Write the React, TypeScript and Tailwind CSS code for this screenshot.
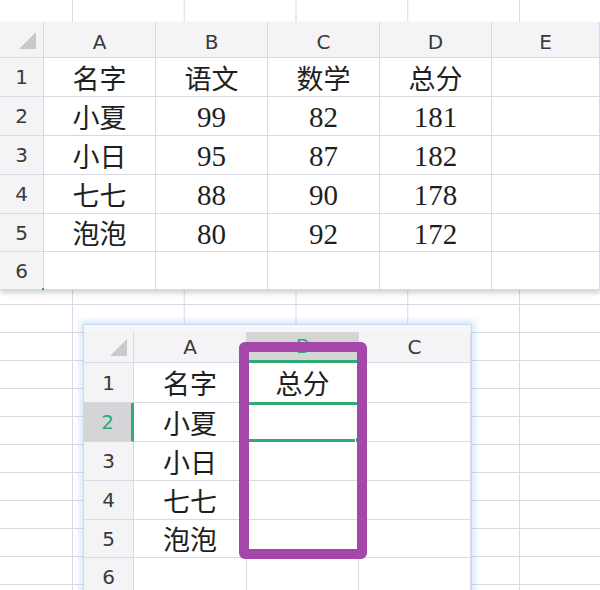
const grid = "border-r border-b border-[#d9d9e4]";
const cjk = "font-['Noto_Sans_CJK_SC','Noto_Sans',sans-serif]";
const num = "font-['Liberation_Serif','Noto_Sans_CJK_SC',serif]";
const head = "font-['DejaVu_Sans','Liberation_Sans',sans-serif]";

const topCols = ["A", "B", "C", "D", "E"];
const topRows = [
  ["名字", "语文", "数学", "总分"],
  ["小夏", "99", "82", "181"],
  ["小日", "95", "87", "182"],
  ["七七", "88", "90", "178"],
  ["泡泡", "80", "92", "172"],
  [],
];

const names = ["名字", "小夏", "小日", "七七", "泡泡", ""];

function Corner() {
  return (
    <svg width="17" height="17" viewBox="0 0 17 17">
      <polygon points="17,0 17,17 0,17" fill="#c9c9c9" />
    </svg>
  );
}

function cellText(v: string) {
  const isNum = /^\d+$/.test(v);
  return (
    <span
      className={`${isNum ? `${num} pt-[3px] text-[29px]` : `${cjk} text-[27px]`} leading-none text-[#1f1f1f]`}
    >
      {v}
    </span>
  );
}

function TopSheet() {
  return (
    <div className="absolute left-0 top-[22px] w-[600px] bg-white shadow-[0_3px_5px_rgba(0,0,0,0.18)]">
      <div className="grid grid-cols-[44px_112px_112px_112px_112px_1fr] grid-rows-[36px_39px_39px_39px_39px_38px_38px]">
        <div className={`${grid} flex items-end justify-end bg-[#f4f4f6] pb-[8px] pr-[7px]`}>
          <Corner />
        </div>
        {topCols.map((c) => (
          <div
            key={c}
            className={`${grid} flex items-center justify-center bg-[#f4f4f6] pt-[4px] ${head} text-[20px] text-[#3a3a3a]`}
          >
            {c}
          </div>
        ))}
        {topRows.map((row, r) => (
          <div key={r} className="contents">
            <div
              className={`${grid} relative flex items-center justify-center bg-[#f4f4f6] ${head} text-[20px] text-[#3a3a3a]`}
            >
              {r + 1}
              {r === 5 && <span className="absolute -bottom-[1px] -right-[1px] h-[2px] w-[2px] bg-[#2fa56e]" />}
            </div>
            {[0, 1, 2, 3, 4].map((c) => (
              <div key={c} className={`${grid} flex items-center justify-center`}>
                {row[c] ? cellText(row[c]) : null}
              </div>
            ))}
          </div>
        ))}
      </div>
    </div>
  );
}

function BottomSheet() {
  return (
    <div className="absolute left-[83px] top-[324px] w-[389px] border border-[#c4daf6] bg-[#f6f6f7] pt-[7px] shadow-[0_0_6px_3px_rgba(140,185,240,0.35)]">
      <div className="grid grid-cols-[50px_113px_112px_1fr] grid-rows-[31px_40px_39px_39px_39px_38px_38px] bg-white">
        <div className={`${grid} flex items-end justify-end bg-[#f4f4f6] pb-[6px] pr-[6px]`}>
          <Corner />
        </div>
        <div className={`${grid} flex items-center justify-center bg-[#f4f4f6] ${head} text-[20px] text-[#3a3a3a]`}>
          A
        </div>
        <div
          className={`flex items-center justify-center border-r border-b-[3px] border-r-[#d9d9e4] border-b-[#2fab74] bg-[#d5d5d7] ${head} text-[20px] text-[#2fab74]`}
        >
          B
        </div>
        <div className={`${grid} flex items-center justify-center bg-[#f4f4f6] ${head} text-[20px] text-[#3a3a3a]`}>
          C
        </div>
        {names.map((n, r) => (
          <div key={r} className="contents">
            {r === 1 ? (
              <div
                className={`flex items-center justify-center border-b border-r-[3px] border-b-[#d9d9e4] border-r-[#2fab74] bg-[#d5d5d7] ${head} text-[20px] text-[#2fab74]`}
              >
                {r + 1}
              </div>
            ) : (
              <div className={`${grid} flex items-center justify-center bg-[#f4f4f6] ${head} text-[20px] text-[#3a3a3a]`}>
                {r + 1}
              </div>
            )}
            <div className={`${grid} flex items-center justify-center`}>{n ? cellText(n) : null}</div>
            {r === 1 ? (
              <div className="relative -mt-[1px] border-y-[3px] border-r-[2px] border-[#2fab74]">
                <span className="absolute -bottom-[4px] -right-[4px] h-[6px] w-[6px] border border-white bg-[#2fab74]" />
              </div>
            ) : (
              <div className={`${grid} flex items-center justify-center`}>{r === 0 ? cellText("总分") : null}</div>
            )}
            <div className={grid} />
          </div>
        ))}
      </div>
    </div>
  );
}

export default function App() {
  return (
    <div className="relative h-[590px] w-[600px] overflow-hidden bg-white bg-[linear-gradient(to_right,#d9d9e4_1px,transparent_1px),linear-gradient(to_bottom,#d9d9e4_1px,transparent_1px)] bg-size-[111.75px_28px] bg-position-[72px_24px]">
      <TopSheet />
      <BottomSheet />
      <div className="absolute left-[239px] top-[342px] h-[217px] w-[128px] rounded-[6px] border-[10px] border-[#a447a9]" />
    </div>
  );
}
